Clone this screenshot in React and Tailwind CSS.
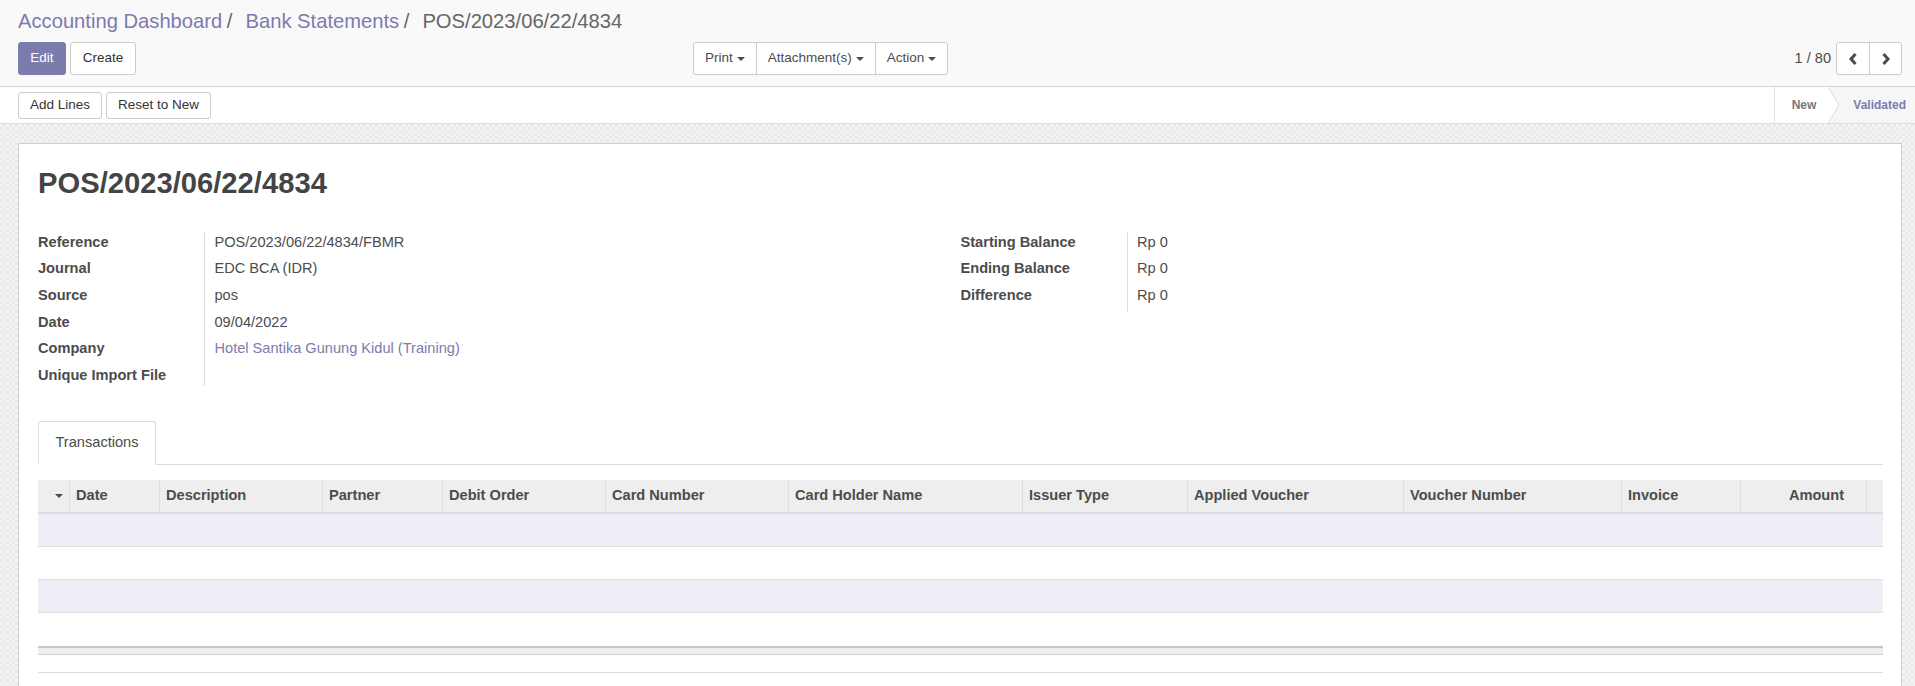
import React from 'react';

const Caret = () => (
  <span className="inline-block w-0 h-0 ml-[4px] border-x-[4px] border-x-transparent border-t-[4px] border-t-[#4c4c4c]" />
);

const leftFields = [
  ['Reference', 'POS/2023/06/22/4834/FBMR'],
  ['Journal', 'EDC BCA (IDR)'],
  ['Source', 'pos'],
  ['Date', '09/04/2022'],
  ['Company', 'Hotel Santika Gunung Kidul (Training)', true],
  ['Unique Import File', ''],
];

const rightFields = [
  ['Starting Balance', 'Rp 0'],
  ['Ending Balance', 'Rp 0'],
  ['Difference', 'Rp 0'],
];

const headers = [
  'Date',
  'Description',
  'Partner',
  'Debit Order',
  'Card Number',
  'Card Holder Name',
  'Issuer Type',
  'Applied Voucher',
  'Voucher Number',
  'Invoice',
];

function FieldGroup({ rows }) {
  return (
    <div className="flex flex-col">
      {rows.map(([label, value, link]) => (
        <div
          key={label}
          className={`grid grid-cols-[167px_1fr] ${value === '' ? 'h-[21px]' : 'h-[26.67px]'}`}
        >
          <div className="border-r border-[#ddd] font-bold text-[#4c4c4c] leading-[20px] whitespace-nowrap">
            {label}
          </div>
          <div className={`pl-[9.5px] leading-[20px] whitespace-nowrap ${link ? 'text-[#7c7bad]' : 'text-[#4c4c4c]'}`}>
            {value}
          </div>
        </div>
      ))}
    </div>
  );
}

function App() {
  return (
    <div className="w-[1915px] h-[686px] overflow-hidden bg-white font-['Liberation_Sans',Arial,sans-serif] text-[#4c4c4c] text-[14.6px]">
      {/* control panel */}
      <div className="h-[87px] bg-[#f9f9f9] border-b border-[#d4d4d4] pl-[18px] pr-[13px]">
        <div className="pt-[9px] h-[33px] flex text-[20.2px] leading-[24px] whitespace-nowrap">
          <span className="text-[#7c7bad]">Accounting Dashboard</span>
          <span className="ml-[4.6px] mr-[13px] text-[#666]">/</span>
          <span className="text-[#7c7bad]">Bank Statements</span>
          <span className="ml-[4.6px] mr-[13px] text-[#666]">/</span>
          <span className="text-[#666]">POS/2023/06/22/4834</span>
        </div>
        <div className="mt-[9px] h-[33px] flex">
          <div className="w-[675px] flex gap-[4px]">
            <button className="h-[33px] w-[48px] rounded-[3px] bg-[#7c7bad] border border-[#7c7bad] text-white text-[13.5px]">
              Edit
            </button>
            <button className="h-[33px] w-[66px] rounded-[3px] bg-white border border-[#ccc] text-[#333] text-[13.5px]">
              Create
            </button>
          </div>
          <div className="flex h-[33px] border border-[#ccc] rounded-[3px] bg-white text-[13.5px] text-[#4c4c4c]">
            <div className="px-[11px] flex items-center">
              Print
              <Caret />
            </div>
            <div className="px-[11px] flex items-center border-l border-[#ccc]">
              Attachment(s)
              <Caret />
            </div>
            <div className="px-[11px] flex items-center border-l border-[#ccc]">
              Action
              <Caret />
            </div>
          </div>
          <div className="ml-auto flex items-center">
            <span className="mr-[5px] text-[14.6px] text-[#4c4c4c]">1 / 80</span>
            <div className="flex h-[33px] border border-[#ccc] rounded-[3px] bg-white">
              <div className="w-[32px] flex items-center justify-center">
                <svg width="10" height="14" viewBox="0 0 10 14">
                  <polyline points="7.5,2 3,7 7.5,12" fill="none" stroke="#4c4c4c" strokeWidth="3" />
                </svg>
              </div>
              <div className="w-[32px] flex items-center justify-center border-l border-[#ccc]">
                <svg width="10" height="14" viewBox="0 0 10 14">
                  <polyline points="2.5,2 7,7 2.5,12" fill="none" stroke="#4c4c4c" strokeWidth="3" />
                </svg>
              </div>
            </div>
          </div>
        </div>
      </div>

      {/* status row */}
      <div className="h-[37px] bg-white border-b border-[#ddd] flex items-center pl-[18px]">
        <button className="h-[27px] w-[84px] rounded-[3px] bg-white border border-[#ccc] text-[#333] text-[13.5px]">
          Add Lines
        </button>
        <button className="ml-[4px] h-[27px] w-[105px] rounded-[3px] bg-white border border-[#ccc] text-[#333] text-[13.5px]">
          Reset to New
        </button>
        <div className="ml-auto self-stretch flex border-l border-[#ddd]">
          <div className="pl-[17px] pr-[12px] flex items-center bg-white text-[12px] font-bold text-[#777]">
            New
          </div>
          <svg width="11" height="36" viewBox="0 0 11 36" className="block">
            <rect x="0" y="0" width="11" height="36" fill="#f6f6f6" />
            <polygon points="0,0 11,18 0,36" fill="#ffffff" />
            <polyline points="0,0 11,18 0,36" fill="none" stroke="#dcdcdc" strokeWidth="1" />
          </svg>
          <div className="pl-[14px] pr-[9px] flex items-center bg-[#f6f6f6] text-[12px] font-bold text-[#7c7bad]">
            Validated
          </div>
        </div>
      </div>

      {/* sheet background */}
      <div className="h-[562px] overflow-hidden pt-[19px] pl-[18px] pr-[13px] bg-[repeating-conic-gradient(#eaeaea_0_25%,#f4f4f4_0_50%)] bg-[length:6px_6px]">
        <div className="h-[600px] bg-white border border-[#cfcfd8] pl-[19px] pr-[18px] pt-[22px]">
          <h1 className="text-[29.2px] leading-[34px] font-bold text-[#444]">POS/2023/06/22/4834</h1>

          <div className="mt-[31.7px] flex">
            <div className="w-1/2">
              <FieldGroup rows={leftFields} />
            </div>
            <div className="w-1/2">
              <FieldGroup rows={rightFields} />
            </div>
          </div>

          {/* notebook */}
          <div className="mt-[34.7px] flex border-b border-[#ddd]">
            <div className="-mb-px h-[44px] px-[16.5px] flex items-center bg-white border border-[#ddd] border-b-white rounded-t-[3px] text-[#4c4c4c]">
              Transactions
            </div>
          </div>

          <div className="mt-[15px]">
            <div className="grid grid-cols-[31px_90px_163px_120px_163px_183px_234px_165px_216px_218px_119px_126px_17px] h-[34px] bg-[#eee] border-b-2 border-[#ddd] font-bold text-[#4c4c4c]">
              <div className="flex items-center justify-end pr-[6px]">
                <span className="inline-block w-0 h-0 border-x-[4px] border-x-transparent border-t-[4px] border-t-[#4c4c4c]" />
              </div>
              {headers.map((h) => (
                <div key={h} className="border-l border-[#ddd] pl-[6px] flex items-center whitespace-nowrap">
                  {h}
                </div>
              ))}
              <div className="border-l border-[#ddd] pr-[22px] flex items-center justify-end">Amount</div>
              <div className="border-l border-[#ddd]" />
            </div>
            <div className="h-[33px] bg-[#eeeef6] border-b border-[#ddd]" />
            <div className="h-[33px] bg-white border-b border-[#ddd]" />
            <div className="h-[33px] bg-[#eeeef6] border-b border-[#ddd]" />
            <div className="h-[33px] bg-white" />
            <div className="h-[9px] bg-[#eee] border-t-2 border-t-[#c8c8c8] border-b border-b-[#d0d0d0]" />
          </div>
          <div className="mt-[17px] border-t border-[#ddd]" />
        </div>
      </div>
    </div>
  );
}

export default App;
